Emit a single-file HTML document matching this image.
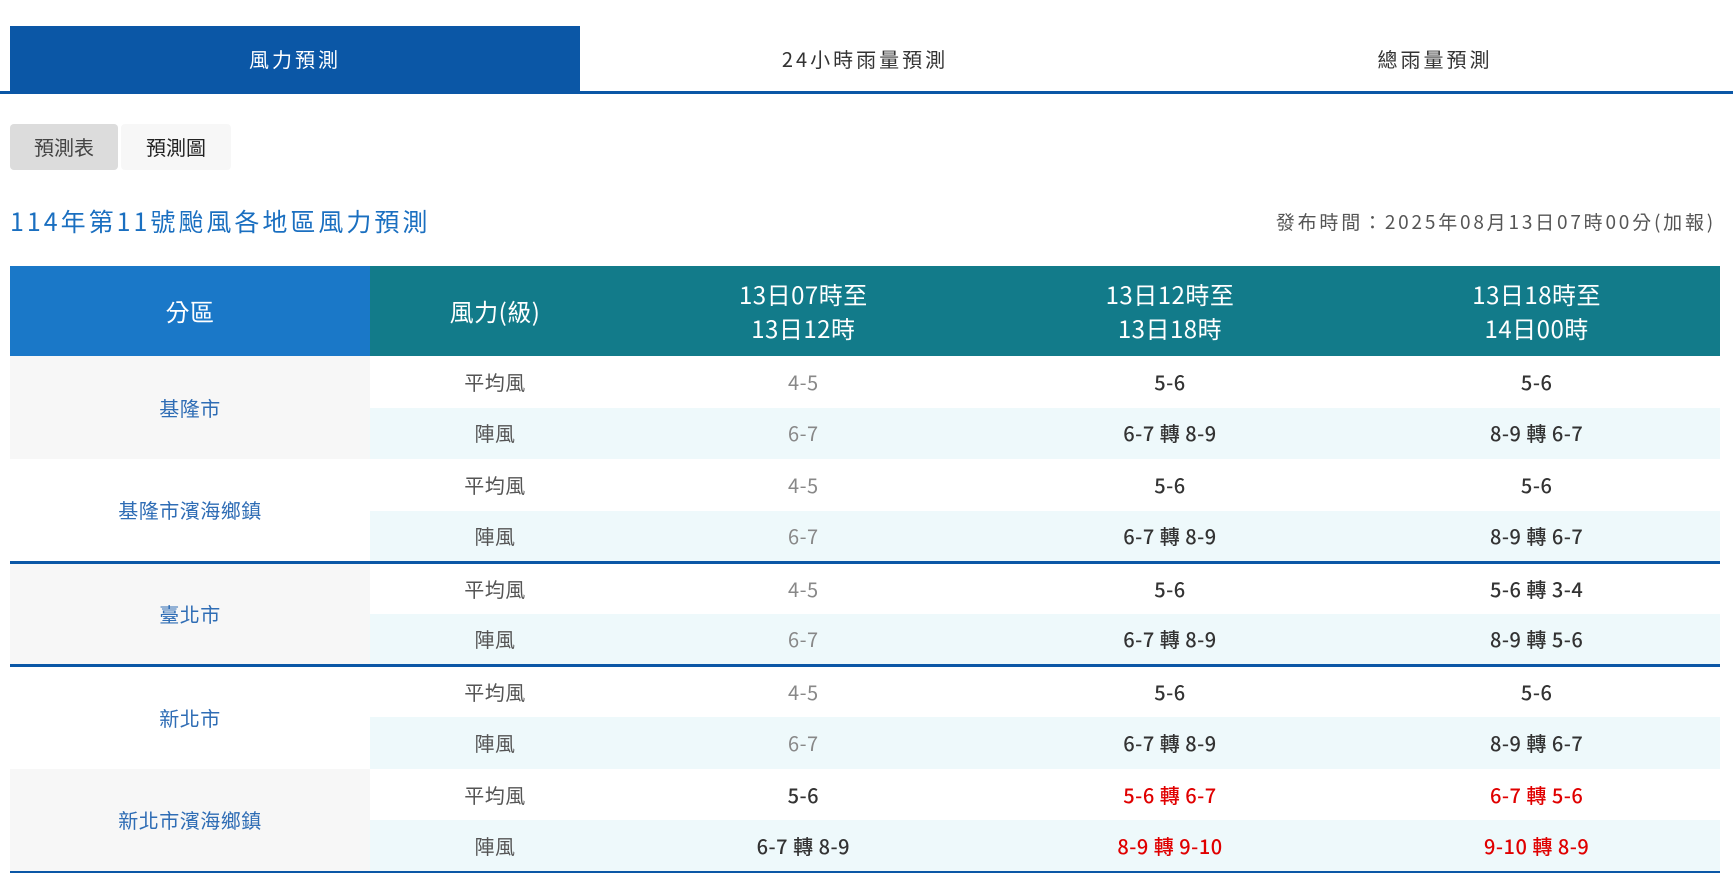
<!DOCTYPE html>
<html><head><meta charset="utf-8"><style>
*{margin:0;padding:0;box-sizing:border-box}
body{width:1733px;height:873px;background:#fff;font-family:"Noto Sans CJK TC","Liberation Sans",sans-serif;position:relative;overflow:hidden}
.tabs{position:absolute;left:0;top:26px;width:1733px;height:68px;border-bottom:3px solid #0b57a6}
.tab{position:absolute;top:0;height:65px;line-height:65px;text-align:center;font-size:20px;letter-spacing:3px;color:#333}
.tab.on{background:#0b57a6;color:#fff}
.btn{position:absolute;top:124px;height:46px;line-height:46px;text-align:center;font-size:20px;color:#444;border-radius:4px}
.title{position:absolute;left:10px;top:203px;font-size:25px;line-height:36px;color:#1a6fc0;letter-spacing:3px}
.pub{position:absolute;right:17px;top:207px;font-size:19px;line-height:30px;color:#555;letter-spacing:2.8px}
table{position:absolute;left:10px;top:266px;width:1710px;border-collapse:collapse;table-layout:fixed}
th{height:90px;color:#fff;font-weight:normal;font-size:24px;line-height:34px;background:#127b8a;letter-spacing:.5px}
th.a{background:#1a78c8}
td{height:51.6px;text-align:center;font-size:20px;line-height:28px;color:#555;letter-spacing:.5px}
td.d{color:#2f6db5}
td.g{background:#f7f7f7}
tr.gu td.v,tr.gu td.k{background:#eef9fb}
.l{color:#888}.b{color:#333;font-weight:500}.r{color:#e00000;font-weight:500}
tr.sep td{border-top:3px solid #0b57a6}
tr.last td{border-bottom:2px solid #0b57a6}
</style></head><body>
<div class="tabs">
<div class="tab on" style="left:10px;width:570px">風力預測</div>
<div class="tab" style="left:580px;width:570px">24小時雨量預測</div>
<div class="tab" style="left:1150px;width:570px">總雨量預測</div>
</div>
<div class="btn" style="left:10px;width:108px;background:#dcdcdc">預測表</div>
<div class="btn" style="left:121px;width:110px;background:#f7f7f7;color:#222">預測圖</div>
<div class="title">114年第11號颱風各地區風力預測</div>
<div class="pub">發布時間：2025年08月13日07時00分(加報)</div>
<table>
<colgroup><col style="width:360px"><col style="width:250px"><col><col><col></colgroup>
<tr><th class="a">分區</th><th>風力(級)</th><th>13日07時至<br>13日12時</th><th>13日12時至<br>13日18時</th><th>13日18時至<br>14日00時</th></tr>
<tr><td rowspan="2" class="d g">基隆市</td><td class="k">平均風</td><td class="v l">4-5</td><td class="v b">5-6</td><td class="v b">5-6</td></tr>
<tr class="gu"><td class="k">陣風</td><td class="v l">6-7</td><td class="v b">6-7 轉 8-9</td><td class="v b">8-9 轉 6-7</td></tr>
<tr><td rowspan="2" class="d">基隆市濱海鄉鎮</td><td class="k">平均風</td><td class="v l">4-5</td><td class="v b">5-6</td><td class="v b">5-6</td></tr>
<tr class="gu"><td class="k">陣風</td><td class="v l">6-7</td><td class="v b">6-7 轉 8-9</td><td class="v b">8-9 轉 6-7</td></tr>
<tr class="sep"><td rowspan="2" class="d g">臺北市</td><td class="k">平均風</td><td class="v l">4-5</td><td class="v b">5-6</td><td class="v b">5-6 轉 3-4</td></tr>
<tr class="gu"><td class="k">陣風</td><td class="v l">6-7</td><td class="v b">6-7 轉 8-9</td><td class="v b">8-9 轉 5-6</td></tr>
<tr class="sep"><td rowspan="2" class="d">新北市</td><td class="k">平均風</td><td class="v l">4-5</td><td class="v b">5-6</td><td class="v b">5-6</td></tr>
<tr class="gu"><td class="k">陣風</td><td class="v l">6-7</td><td class="v b">6-7 轉 8-9</td><td class="v b">8-9 轉 6-7</td></tr>
<tr><td rowspan="2" class="d g" style="border-bottom:2px solid #0b57a6">新北市濱海鄉鎮</td><td class="k">平均風</td><td class="v b">5-6</td><td class="v r">5-6 轉 6-7</td><td class="v r">6-7 轉 5-6</td></tr>
<tr class="gu last"><td class="k">陣風</td><td class="v b">6-7 轉 8-9</td><td class="v r">8-9 轉 9-10</td><td class="v r">9-10 轉 8-9</td></tr>
</table>
</body></html>
